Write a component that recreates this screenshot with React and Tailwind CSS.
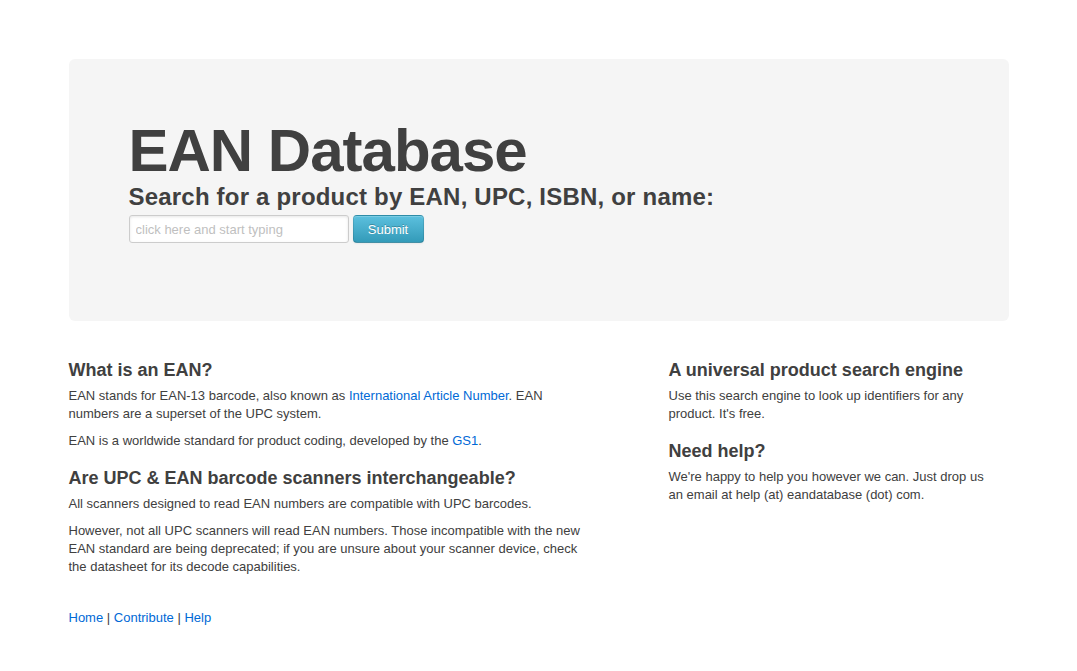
export default function App() {
  return (
    <div className="min-h-screen bg-white pt-[59px] pb-[40px] font-['Liberation_Sans',Arial,sans-serif] text-[13px] leading-[18px] text-[#404040]">
      <div className="mx-auto w-[940px]">
        {/* hero */}
        <div className="mb-[21px] rounded-[6px] bg-[#f5f5f5] px-[60px] pt-[60px] pb-[60px]">
          <h1 className="mb-[-4px] text-[60px] leading-[64px] font-bold tracking-[-1px] text-[#404040]">
            EAN Database
          </h1>
          <h2 className="text-[24px] leading-[36px] font-bold tracking-[0.2px] text-[#404040]">
            Search for a product by EAN, UPC, ISBN, or name:
          </h2>
          <form className="mb-[18px] flex items-start gap-[4px]" onSubmit={(e) => e.preventDefault()}>
            <input
              type="text"
              placeholder="click here and start typing"
              className="box-border h-[28px] w-[220px] rounded-[3px] border border-[#cccccc] bg-white px-[6px] py-[4px] text-[13px] leading-[18px] text-[#808080] shadow-[inset_0_1px_3px_rgba(0,0,0,0.1)] outline-none placeholder:text-[#bfbfbf]"
            />
            <button
              type="submit"
              className="box-border h-[28px] w-[71px] rounded-[4px] border border-[rgba(0,0,0,0.1)] border-b-[rgba(0,0,0,0.25)] bg-gradient-to-b from-[#5bc0de] to-[#339bb9] text-[13px] leading-[15px] text-white [text-shadow:0_-1px_0_rgba(0,0,0,0.25)] shadow-[inset_0_1px_0_rgba(255,255,255,0.2),0_1px_2px_rgba(0,0,0,0.05)]"
            >
              Submit
            </button>
          </form>
        </div>

        {/* content */}
        <div className="flex gap-[80px]">
          <div className="w-[520px]">
            <h3 className="mt-[15px] mb-[3px] text-[18px] leading-[27px] font-bold">What is an EAN?</h3>
            <p className="mb-[9px]">
              EAN stands for EAN-13 barcode, also known as{" "}
              <a href="#" className="text-[#0069d6]">International Article Number</a>. EAN
              numbers are a superset of the UPC system.
            </p>
            <p className="mb-[9px]">
              EAN is a worldwide standard for product coding, developed by the{" "}
              <a href="#" className="text-[#0069d6]">GS1</a>.
            </p>
            <h3 className="mt-[15px] mb-[3px] text-[18px] leading-[27px] font-bold">
              Are UPC &amp; EAN barcode scanners interchangeable?
            </h3>
            <p className="mb-[9px]">All scanners designed to read EAN numbers are compatible with UPC barcodes.</p>
            <p className="mb-[9px]">
              However, not all UPC scanners will read EAN numbers. Those incompatible with the new EAN standard
              are being deprecated; if you are unsure about your scanner device, check the datasheet for its
              decode capabilities.
            </p>
          </div>
          <div className="w-[325px]">
            <h3 className="mt-[15px] mb-[3px] text-[18px] leading-[27px] font-bold">A universal product search engine</h3>
            <p className="mb-[9px]">Use this search engine to look up identifiers for any product. It's free.</p>
            <h3 className="mt-[15px] mb-[3px] text-[18px] leading-[27px] font-bold">Need help?</h3>
            <p className="mb-[9px]">
              We're happy to help you however we can. Just drop us an email at help (at) eandatabase (dot) com.
            </p>
          </div>
        </div>

        {/* footer */}
        <footer className="mt-[24px]">
          <a href="#" className="text-[#0069d6]">Home</a> |{" "}
          <a href="#" className="text-[#0069d6]">Contribute</a> |{" "}
          <a href="#" className="text-[#0069d6]">Help</a>
        </footer>
      </div>
    </div>
  );
}
